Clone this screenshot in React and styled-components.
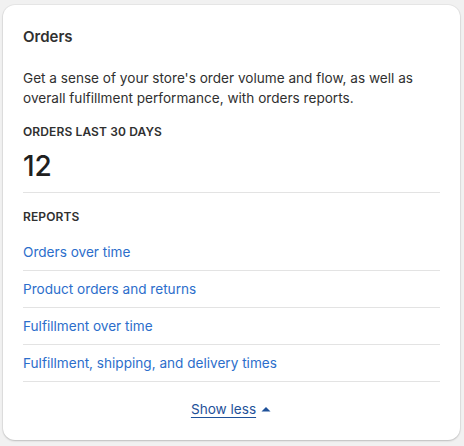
import React from 'react';
import styled, { createGlobalStyle } from 'styled-components';

const GlobalStyle = createGlobalStyle`
  * { box-sizing: border-box; }
  body {
    margin: 0;
    background: #f1f1f1;
    font-family: Inter, "Noto Sans", sans-serif;
    color: #303030;
  }
`;

const Page = styled.div`
  padding: 5px 4px 6px 3px;
`;

const Card = styled.section`
  background: #fff;
  border-radius: 12px;
  box-shadow: 0 0 0 1px rgba(0, 0, 0, 0.04), 0 1px 2px rgba(0, 0, 0, 0.18);
  padding: 22px 20px 21px;
`;

const Title = styled.h2`
  margin: 0;
  font-size: 15px;
  line-height: 20px;
  font-weight: 600;
  color: #303030;
`;

const Description = styled.p`
  margin: 21px 0 0;
  font-size: 13.6px;
  line-height: 20px;
  font-weight: 400;
`;

const Label = styled.h3`
  margin: 16px 0 0;
  font-size: 12px;
  line-height: 16px;
  font-weight: 600;
  letter-spacing: 0.01em;
  text-transform: uppercase;
  color: #303030;
`;

const Metric = styled.div`
  margin-top: 8px;
  font-size: 28px;
  line-height: 36px;
  font-weight: 500;
  color: #202020;
  padding-bottom: 8px;
  border-bottom: 1px solid #e3e3e3;
`;

const ReportList = styled.ul`
  list-style: none;
  margin: 9px 0 0;
  padding: 0;
`;

const ReportItem = styled.li`
  padding: 8px 0;
  border-bottom: 1px solid #e3e3e3;
  font-size: 13.6px;
  line-height: 20px;
`;

const ReportLink = styled.a`
  display: block;
  color: #2c6ecb;
  text-decoration: none;
  font-weight: 400;
`;

const Footer = styled.div`
  display: flex;
  justify-content: center;
  padding-top: 17px;
`;

const ToggleButton = styled.button`
  display: inline-flex;
  align-items: center;
  gap: 4px;
  border: 0;
  background: none;
  padding: 0;
  font-family: inherit;
  font-size: 13.6px;
  line-height: 20px;
  color: #1f5199;
  text-decoration: underline;
  text-underline-offset: 3px;
  cursor: pointer;
`;

const reports = [
  'Orders over time',
  'Product orders and returns',
  'Fulfillment over time',
  'Fulfillment, shipping, and delivery times',
];

export default function App() {
  return (
    <>
      <GlobalStyle />
      <Page>
        <Card>
          <Title>Orders</Title>
          <Description>
            Get a sense of your store's order volume and flow, as well as overall fulfillment
            performance, with orders reports.
          </Description>
          <Label>Orders last 30 days</Label>
          <Metric>12</Metric>
          <Label>Reports</Label>
          <ReportList>
            {reports.map(r => (
              <ReportItem key={r}>
                <ReportLink href="#">{r}</ReportLink>
              </ReportItem>
            ))}
          </ReportList>
          <Footer>
            <ToggleButton>
              Show less
              <svg width="12" height="12" viewBox="0 0 12 12" aria-hidden="true">
                <path d="M1.5 8.5 6 4l4.5 4.5z" fill="#1f5199" />
              </svg>
            </ToggleButton>
          </Footer>
        </Card>
      </Page>
    </>
  );
}
